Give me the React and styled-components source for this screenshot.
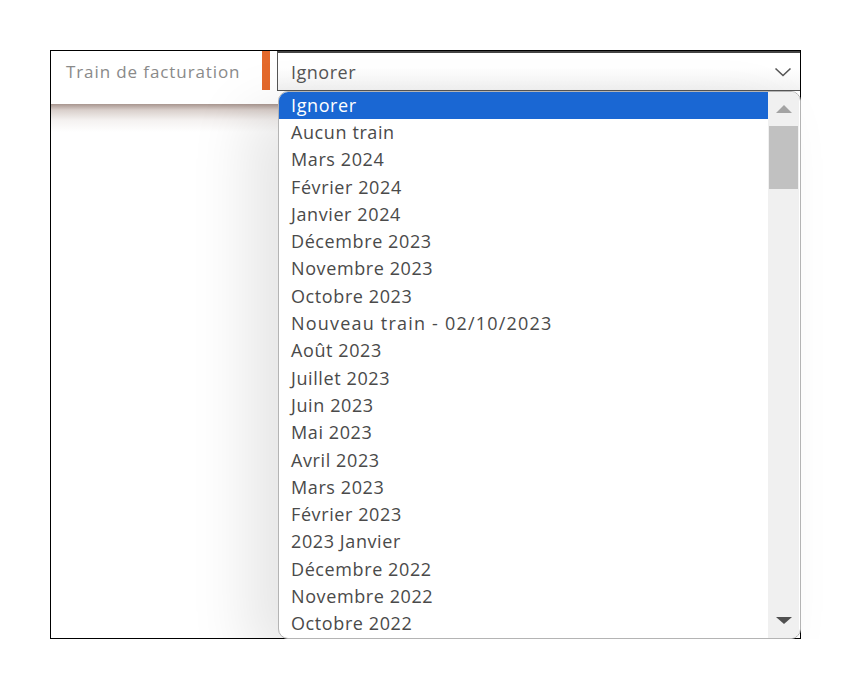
import React from "react";
import styled, { createGlobalStyle } from "styled-components";

const Global = createGlobalStyle`
  html, body { margin: 0; padding: 0; background: #fff; }
  body { font-family: "Open Sans", "Noto Sans", sans-serif; }
`;

const Frame = styled.div`
  position: relative;
  margin: 50px 0 0 50px;
  width: 751px;
  height: 589px;
  box-sizing: border-box;
  border: 1px solid #000;
  background: #fff;
`;

const Header = styled.div`
  display: flex;
  align-items: flex-start;
  height: 53px;
  background: #fff;
`;

const Label = styled.div`
  width: 211px;
  height: 41px;
  box-sizing: border-box;
  padding-left: 15px;
  display: flex;
  align-items: center;
  color: #8a8a8a;
  font-size: 17px;
  letter-spacing: 0.9px;
  white-space: nowrap;
`;

const Accent = styled.div`
  width: 8px;
  height: 39px;
  background: #e4692b;
  margin-right: 7px;
`;

const Select = styled.div`
  flex: 1;
  height: 40px;
  box-sizing: border-box;
  border: 1px solid #555;
  border-top: 2px solid #444;
  border-right: none;
  background: linear-gradient(#fff 40%, #f3f3f3);
  display: flex;
  align-items: center;
  justify-content: space-between;
  padding: 0 8px 0 13px;
  color: #555;
  font-size: 18px;
  letter-spacing: 0.5px;
`;

const Content = styled.div`
  height: calc(100% - 53px);
  background: linear-gradient(#a8968f 0px, #d9cfcb 6px, #f4f1f0 16px, #fff 28px);
`;

const Dropdown = styled.div`
  position: absolute;
  left: 227px;
  top: 40px;
  width: 523px;
  height: 548px;
  box-sizing: border-box;
  border: 1px solid #b4b4b4;
  border-radius: 10px;
  background: #fff;
  overflow: hidden;
  display: flex;
  box-shadow: -30px 20px 60px rgba(0, 0, 0, 0.1);
`;

const List = styled.div`
  flex: 1;
  display: flex;
  flex-direction: column;
  overflow: hidden;
`;

const Option = styled.div`
  flex: 0 0 27.3px;
  display: flex;
  align-items: center;
  padding-left: 12px;
  padding-bottom: 2px;
  box-sizing: border-box;
  font-size: 18px;
  letter-spacing: ${(p) => (p.$digits ? "1.2px" : "0.6px")};
  line-height: 1;
  color: ${(p) => (p.$active ? "#fff" : "#4a4a4a")};
  background: ${(p) => (p.$active ? "#1a67d3" : "transparent")};
  white-space: nowrap;
`;

const ScrollBar = styled.div`
  width: 31px;
  margin-right: 1px;
  background: #f0f0f0;
  display: flex;
  flex-direction: column;
  align-items: center;
`;

const ArrowBtn = styled.div`
  height: ${(p) => p.$h}px;
  width: 100%;
  display: flex;
  align-items: ${(p) => p.$align};
  justify-content: center;
  box-sizing: border-box;
  padding: ${(p) => p.$pad};
`;

const Track = styled.div`
  flex: 1;
  width: 100%;
  display: flex;
  flex-direction: column;
  align-items: center;
`;

const Thumb = styled.div`
  width: 29px;
  height: 63px;
  background: #c1c1c1;
`;

const options = [
  "Ignorer",
  "Aucun train",
  "Mars 2024",
  "Février 2024",
  "Janvier 2024",
  "Décembre 2023",
  "Novembre 2023",
  "Octobre 2023",
  "Nouveau train - 02/10/2023",
  "Août 2023",
  "Juillet 2023",
  "Juin 2023",
  "Mai 2023",
  "Avril 2023",
  "Mars 2023",
  "Février 2023",
  "2023 Janvier",
  "Décembre 2022",
  "Novembre 2022",
  "Octobre 2022",
];

export default function App() {
  return (
    <>
      <Global />
      <Frame>
        <Header>
          <Label>Train de facturation</Label>
          <Accent />
          <Select>
            <span>Ignorer</span>
            <svg width="18" height="12" viewBox="0 0 18 12">
              <path d="M1.5 2.5 L9 9.5 L16.5 2.5" fill="none" stroke="#555" strokeWidth="1.6" />
            </svg>
          </Select>
        </Header>
        <Content />
        <Dropdown>
          <List>
            {options.map((o, i) => (
              <Option key={o} $active={i === 0} $digits={o.includes("/")}>
                {o}
              </Option>
            ))}
          </List>
          <ScrollBar>
            <ArrowBtn $h={34} $align="flex-start" $pad="13px 0 0 0">
              <svg width="16" height="8" viewBox="0 0 16 8">
                <path d="M0 8 L8 0 L16 8 Z" fill="#a3a3a3" />
              </svg>
            </ArrowBtn>
            <Track>
              <Thumb />
            </Track>
            <ArrowBtn $h={34} $align="flex-end" $pad="0 0 14px 0">
              <svg width="16" height="7" viewBox="0 0 16 7">
                <path d="M0 0 L16 0 L8 7 Z" fill="#505050" />
              </svg>
            </ArrowBtn>
          </ScrollBar>
        </Dropdown>
      </Frame>
    </>
  );
}
